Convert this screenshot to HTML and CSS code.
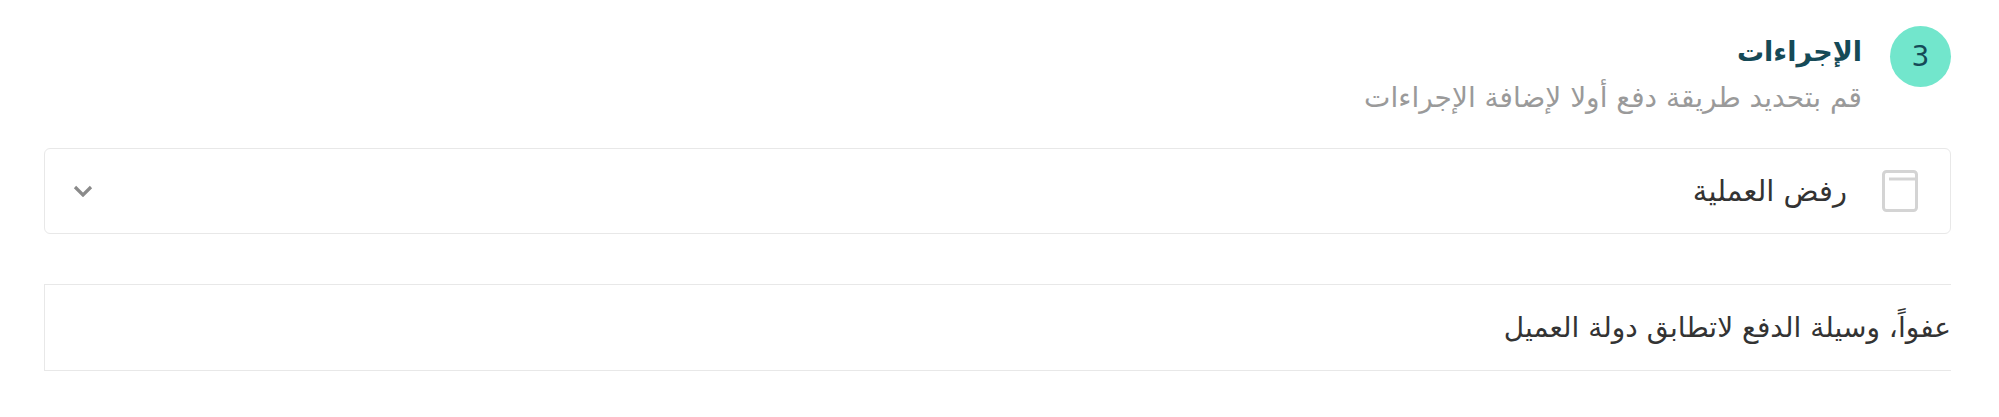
FILE: index.html
```html
<!DOCTYPE html>
<html lang="ar" dir="rtl">
<head>
    <meta charset="UTF-8">
    <title>الإجراءات</title>
    <link rel="stylesheet" href="styles.css">
</head>
<body>
    <div class="step">
        <div class="step__head">
            <div class="step__num">3</div>
            <div class="step__titles">
                <h2 class="step__title">الإجراءات</h2>
                <p class="step__sub">قم بتحديد طريقة دفع أولا لإضافة الإجراءات</p>
            </div>
        </div>

        <div class="action">
            <svg class="action__icon" width="36" height="42" viewBox="0 0 36 42">
                <rect x="1.5" y="1.5" width="33" height="39" rx="3" fill="none" stroke="#d4d4d4" stroke-width="3"/>
                <line x1="7" y1="9" x2="33" y2="9" stroke="#d4d4d4" stroke-width="3"/>
            </svg>
            <span class="action__label">رفض العملية</span>
            <svg class="action__chevron" width="20" height="12" viewBox="0 0 20 12">
                <polyline points="2,2 10,10 18,2" fill="none" stroke="#8a8a8a" stroke-width="3.2"/>
            </svg>
        </div>

        <div class="message">عفواً، وسيلة الدفع لاتطابق دولة العميل</div>
    </div>
</body>
</html>
```

FILE: styles.css
```css
body {
    margin: 0;
    background: #ffffff;
    font-family: "DejaVu Sans", "Noto Sans", sans-serif;
    color: #333333;
}

.step {
    padding: 26px 48px 0 44px;
}

.step__head {
    display: flex;
    align-items: flex-start;
    gap: 28px;
}

.step__num {
    width: 61px;
    height: 61px;
    border-radius: 50%;
    background: #72e6cc;
    color: #154a57;
    font-size: 28px;
    display: flex;
    align-items: center;
    justify-content: center;
    flex-shrink: 0;
}

.step__title {
    margin: 6px 0 0;
    font-size: 27px;
    font-weight: 600;
    color: #154a57;
    line-height: 40px;
}

.step__sub {
    margin: 8px 0 0;
    font-size: 28px;
    color: #9a9a9a;
    line-height: 36px;
}

.action {
    margin-top: 32px;
    height: 84px;
    border: 1px solid #e8e8e8;
    border-radius: 6px;
    display: flex;
    align-items: center;
    padding: 0 32px 0 28px;
}

.action__icon {
    flex-shrink: 0;
}

.action__label {
    margin-right: 35px;
    font-size: 29px;
    color: #333333;
}

.action__chevron {
    margin-right: auto;
}

.message {
    margin-top: 50px;
    height: 85px;
    border: 1px solid #e8e8e8;
    border-right: none;
    display: flex;
    align-items: center;
    font-size: 28px;
    color: #333333;
}
```
